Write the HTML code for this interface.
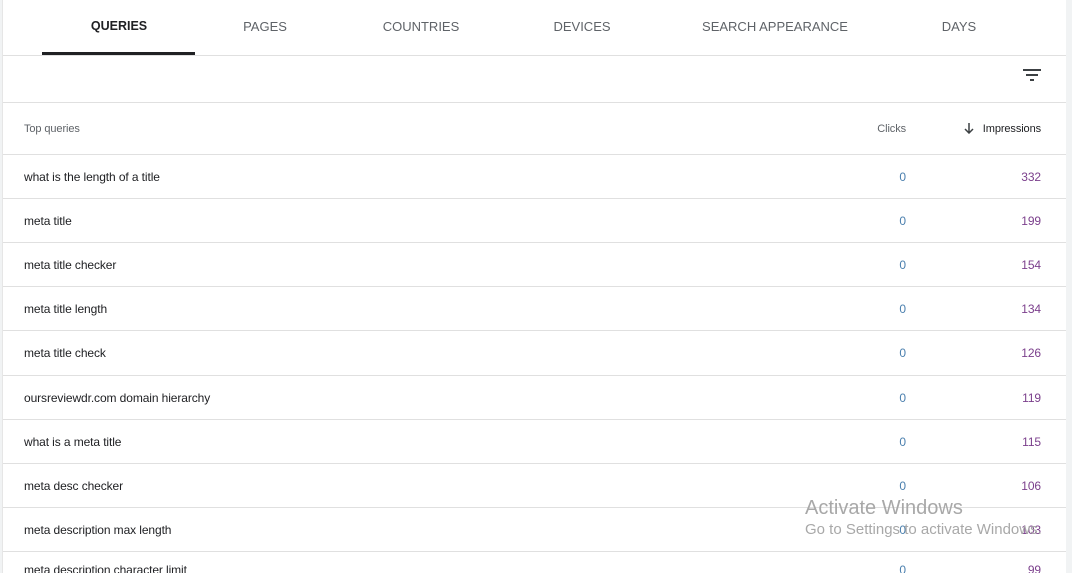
<!DOCTYPE html>
<html><head><style>
html,body{margin:0;width:1072px;height:573px;overflow:hidden}
body{background:#f1f3f4;font-family:"Liberation Sans",Arial,sans-serif;position:relative}
.card{position:absolute;left:2px;top:0;width:1063px;height:573px;background:#fff;border-left:1px solid #e6e6e6;overflow:hidden}
.tabs{position:absolute;left:0;top:0;width:100%;height:55px;border-bottom:1px solid #e0e0e0}
.tab{position:absolute;top:19px;font-size:13px;color:#5f6368;transform:translateX(-50%)}
.tab.a{color:#202124;font-weight:bold;font-size:12.5px}
.ul{position:absolute;left:39px;width:153px;top:52px;height:3px;background:#202124}
.tool{position:absolute;top:56px;height:46px;width:100%;border-bottom:1px solid #e0e0e0}
.row{position:absolute;left:0;width:100%;border-bottom:1px solid #e0e0e0;font-size:12px;color:#202124;letter-spacing:-0.1px}
.row span{position:absolute;top:50%;transform:translateY(-50%)}
.q{left:21px}.c{right:160px;color:#4a7fae}.i{right:25px;color:#7b3f8c}
.h{font-size:11px;color:#5f6368}
.wm{position:absolute;left:805px;color:#a8a8a8}
</style></head><body>
<div class="card">
<div class="tabs">
<div class="tab a" style="left:116px">QUERIES</div>
<div class="tab" style="left:262px">PAGES</div>
<div class="tab" style="left:418px">COUNTRIES</div>
<div class="tab" style="left:579px">DEVICES</div>
<div class="tab" style="left:772px">SEARCH APPEARANCE</div>
<div class="tab" style="left:956px">DAYS</div>
<div class="ul"></div>
</div>
<div class="tool">
<svg style="position:absolute;left:1020px;top:12px" width="18" height="14"><rect x="0" y="1" width="18" height="2" fill="#3c4043"/><rect x="3" y="6" width="12" height="2" fill="#3c4043"/><rect x="7" y="11" width="4" height="2" fill="#3c4043"/></svg>
</div>
<div class="row h" style="top:103px;height:51px"><span class="q">Top queries</span><span class="c" style="color:#5f6368">Clicks</span><span class="i" style="color:#202124">Impressions</span>
<svg style="position:absolute;right:92px;top:20px" width="10" height="11"><path d="M5 0V10M1 6L5 10L9 6" stroke="#3c4043" stroke-width="1.5" fill="none"/></svg></div>
<div class="row" style="top:155px;height:43px"><span class="q">what is the length of a title</span><span class="c">0</span><span class="i">332</span></div>
<div class="row" style="top:199px;height:43px"><span class="q">meta title</span><span class="c">0</span><span class="i">199</span></div>
<div class="row" style="top:243px;height:43px"><span class="q">meta title checker</span><span class="c">0</span><span class="i">154</span></div>
<div class="row" style="top:287px;height:43px"><span class="q">meta title length</span><span class="c">0</span><span class="i">134</span></div>
<div class="row" style="top:331px;height:44px"><span class="q">meta title check</span><span class="c">0</span><span class="i">126</span></div>
<div class="row" style="top:376px;height:43px"><span class="q">oursreviewdr.com domain hierarchy</span><span class="c">0</span><span class="i">119</span></div>
<div class="row" style="top:420px;height:43px"><span class="q">what is a meta title</span><span class="c">0</span><span class="i">115</span></div>
<div class="row" style="top:464px;height:43px"><span class="q">meta desc checker</span><span class="c">0</span><span class="i">106</span></div>
<div class="row" style="top:508px;height:43px"><span class="q">meta description max length</span><span class="c">0</span><span class="i">103</span></div>
<div class="row" style="top:552px;height:43px"><span class="q" style="top:18px">meta description character limit</span><span class="c" style="top:18px">0</span><span class="i" style="top:18px">99</span></div>
</div>
<div class="wm" style="top:497px;font-size:20px">Activate Windows</div>
<div class="wm" style="top:521px;font-size:15px">Go to Settings to activate Windows.</div>
</body></html>
